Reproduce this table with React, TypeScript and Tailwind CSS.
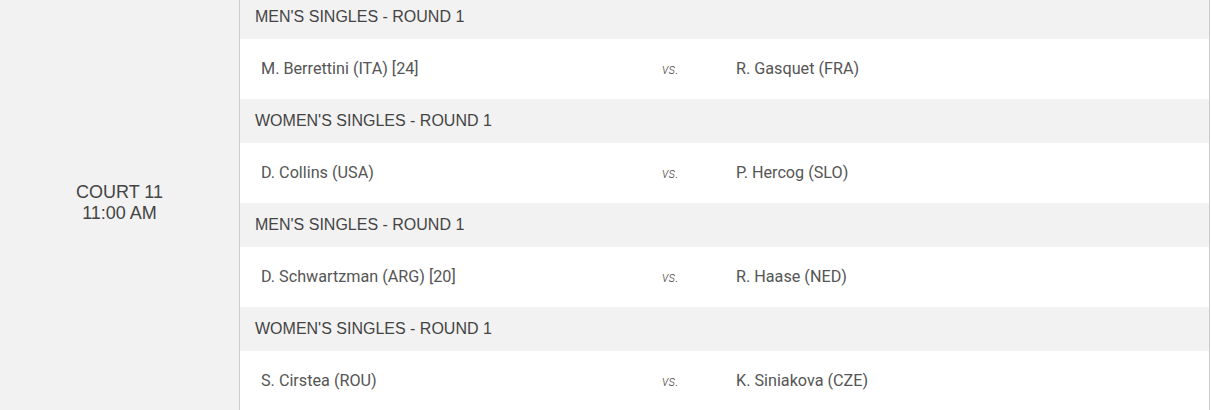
import React from "react";

const matches = [
  { title: "MEN'S SINGLES - ROUND 1", p1: "M. Berrettini (ITA) [24]", p2: "R. Gasquet (FRA)" },
  { title: "WOMEN'S SINGLES - ROUND 1", p1: "D. Collins (USA)", p2: "P. Hercog (SLO)" },
  { title: "MEN'S SINGLES - ROUND 1", p1: "D. Schwartzman (ARG) [20]", p2: "R. Haase (NED)" },
  { title: "WOMEN'S SINGLES - ROUND 1", p1: "S. Cirstea (ROU)", p2: "K. Siniakova (CZE)" },
];

export default function App() {
  return (
    <div className="w-[1211px] h-[410px] overflow-hidden bg-white">
      <div className="flex -mt-[5px] w-[1211px]">
        <div className="w-[240px] shrink-0 bg-[#f2f2f2] border-r border-[#cccccc] flex flex-col items-center justify-center text-[18px] leading-[21px] text-[#444] font-['Liberation_Sans',Arial,sans-serif]">
          <div>COURT 11</div>
          <div>11:00 AM</div>
        </div>
        <div className="w-[970px] border-r border-[#cccccc] flex flex-col">
          {matches.map((m, i) => (
            <div key={i} className="flex flex-col">
              <div className="h-[44px] bg-[#f2f2f2] flex items-center pl-[15px] text-[16px] text-[#444] font-['Liberation_Sans',Arial,sans-serif]">
                {m.title}
              </div>
              <div className="h-[60px] bg-white flex items-center font-['Roboto',sans-serif] text-[16.2px] text-[#555] font-normal">
                <div className="w-[422px] pl-[21px]">{m.p1}</div>
                <div className="w-[74px] text-[14px] italic text-[#555] font-light">vs.</div>
                <div>{m.p2}</div>
              </div>
            </div>
          ))}
        </div>
      </div>
    </div>
  );
}
